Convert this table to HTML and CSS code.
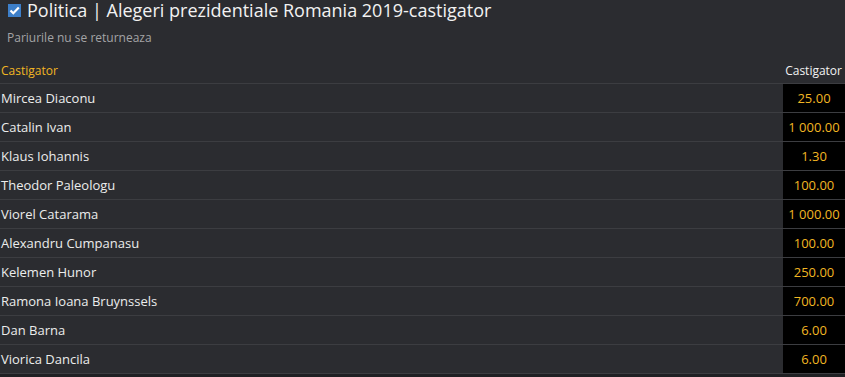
FILE: index.html
```html
<!DOCTYPE html>
<html>
<head>
<meta charset="utf-8">
<link rel="stylesheet" href="styles.css">
</head>
<body>
<div class="market">
  <div class="title">
    <span class="check"><svg width="13" height="13" viewBox="0 0 13 13"><rect x="0" y="0" width="13" height="13" fill="#3d7fc9"/><path d="M2.5 6.5 L5.3 9.3 L10.8 3.6" stroke="#fff" stroke-width="2.2" fill="none"/></svg></span>
    <span class="title-text">Politica | Alegeri prezidentiale Romania 2019-castigator</span>
  </div>
  <div class="note">Pariurile nu se returneaza</div>
  <div class="head">
    <span class="head-left">Castigator</span>
    <span class="head-right">Castigator</span>
  </div>
  <div class="rows">
    <div class="row"><span class="name">Mircea Diaconu</span><span class="odd">25.00</span></div>
    <div class="row"><span class="name">Catalin Ivan</span><span class="odd">1 000.00</span></div>
    <div class="row"><span class="name">Klaus Iohannis</span><span class="odd">1.30</span></div>
    <div class="row"><span class="name">Theodor Paleologu</span><span class="odd">100.00</span></div>
    <div class="row"><span class="name">Viorel Catarama</span><span class="odd">1 000.00</span></div>
    <div class="row"><span class="name">Alexandru Cumpanasu</span><span class="odd">100.00</span></div>
    <div class="row"><span class="name">Kelemen Hunor</span><span class="odd">250.00</span></div>
    <div class="row"><span class="name">Ramona Ioana Bruynssels</span><span class="odd">700.00</span></div>
    <div class="row"><span class="name">Dan Barna</span><span class="odd">6.00</span></div>
    <div class="row"><span class="name">Viorica Dancila</span><span class="odd">6.00</span></div>
  </div>
</div>
</body>
</html>
```

FILE: styles.css
```css
html, body {
  margin: 0;
  padding: 0;
  background: #1f2023;
}
body {
  font-family: "Open Sans", "Liberation Sans", sans-serif;
  color: #ececec;
}
.market {
  background: #2b2c30;
}
.title {
  display: flex;
  align-items: center;
  height: 21px;
  padding-left: 8px;
  gap: 6px;
}
.check {
  display: flex;
}
.title-text {
  font-size: 18px;
  line-height: 21px;
  color: #f2f2f2;
}
.note {
  font-size: 12px;
  color: #a4a4a6;
  padding: 7px 0 0 7px;
  height: 20px;
  line-height: 20px;
}
.head {
  display: flex;
  justify-content: space-between;
  align-items: center;
  height: 27px;
  margin-top: 9px;
  font-size: 12px;
  border-bottom: 1px solid #3c3d41;
  box-sizing: border-box;
}
.head-left {
  color: #f2b623;
  padding-left: 1px;
}
.head-right {
  color: #f2f2f2;
  padding-right: 3px;
}
.row {
  display: flex;
  height: 29px;
  border-bottom: 1px solid #3c3d41;
  box-sizing: border-box;
  align-items: stretch;
}
.name {
  flex: 1;
  display: flex;
  align-items: center;
  font-size: 13px;
  padding-left: 1px;
}
.odd {
  width: 62px;
  background: #000;
  color: #f2b623;
  font-size: 13px;
  display: flex;
  align-items: center;
  justify-content: center;
}
```
